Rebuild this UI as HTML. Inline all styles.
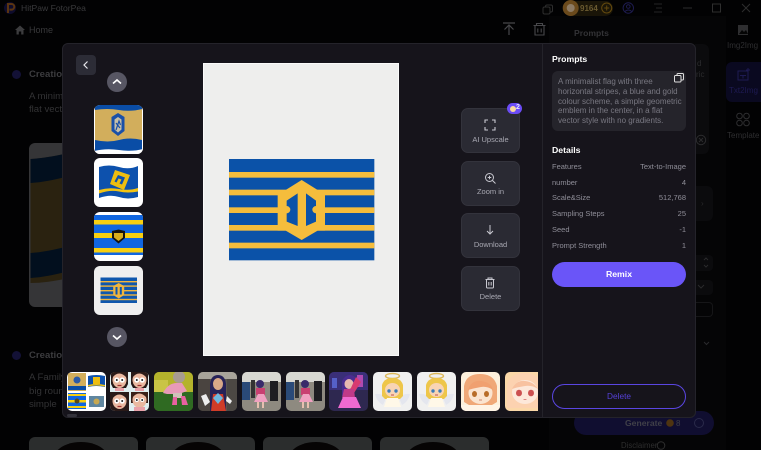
<!DOCTYPE html>
<html><head><meta charset="utf-8">
<style>
html,body{margin:0;padding:0;background:#020203;width:761px;height:450px;overflow:hidden;}
#w{position:absolute;left:0;top:0;width:761px;height:450px;overflow:hidden;font-family:"Liberation Sans",sans-serif;}
.a{position:absolute;white-space:nowrap;}
.bt{position:absolute;left:461.3px;width:56.4px;background:#2a2a33;border:1px solid #33333c;border-radius:7px;height:43.200px;box-sizing:content-box;}
.bt span{position:absolute;left:0;right:0;top:24.500px;text-align:center;font-size:7.500px;line-height:11px;color:#a8a8b2;}
.bt svg{position:absolute;left:21.200px;top:9px;}
.th{position:absolute;left:93.500px;width:49px;height:49px;border-radius:6px;overflow:hidden;}
.st{position:absolute;top:372px;width:39px;height:39px;border-radius:5px;overflow:hidden;}
.st svg,.th svg{display:block;}
.dt{position:absolute;left:552px;width:134px;font-size:7.500px;line-height:12px;color:#8f8e98;}
.dt b{position:absolute;right:0;font-weight:normal;}
.dim{position:absolute;white-space:nowrap;color:#3a3a3c;}
</style></head><body><div id="w">

<!-- background app, dimmed -->
<div class="a" style="left:549px;top:16px;width:177px;height:434px;background:#050506"></div>
<svg class="a" style="left:0;top:0" width="761" height="42" viewBox="0 0 761 42">
<circle cx="10" cy="8" r="6" fill="#0e0c2c"/><path d="M8 13V4h3.500a2.800 2.800 0 0 1 0 5.600H9.500" fill="none" stroke="#5a3410" stroke-width="2"/>
<path d="M15 30l5-4.500 5 4.500h-1.500v4.500h-2.300v-3h-2.400v3h-2.300V30z" fill="#3c3c3e"/>
<rect x="545.500" y="5" width="7" height="7" rx="1.500" fill="none" stroke="#2e2e2e"/><rect x="543" y="7" width="7" height="7" rx="1.500" fill="#040404" stroke="#2e2e2e"/>
<rect x="563" y="1" width="50" height="15" rx="7.500" fill="#1a1508"/>
<circle cx="570.700" cy="8" r="8" fill="#6b4a1c"/><circle cx="570.700" cy="8" r="4" fill="#8c7a64"/>
<text x="580" y="11" font-size="8" font-weight="bold" fill="#6a5a30" font-family="Liberation Sans">9164</text>
<circle cx="606.700" cy="8" r="5" fill="none" stroke="#63490e"/><path d="M604.200 8h5M606.700 5.500v5" stroke="#63490e"/>
<circle cx="628.300" cy="8" r="5.200" fill="none" stroke="#1e1c50"/><circle cx="628.300" cy="6.500" r="1.800" fill="none" stroke="#1e1c50"/><path d="M624.800 11.500q3.500-3 7 0" fill="none" stroke="#1e1c50"/>
<path d="M654 4h8M656 8h6M654 12h8" stroke="#242424"/>
<path d="M683 8h9" stroke="#2c2c2c"/>
<rect x="712.500" y="4" width="8" height="8" fill="none" stroke="#2e2e2e"/>
<path d="M742 4l8 8M750 4l-8 8" stroke="#2e2e2e"/>
<path d="M503 23h12M509 35V25M504.500 29.500L509 25l4.500 4.500" fill="none" stroke="#47474a" stroke-width="1.200"/>
<path d="M533.500 25.500h12M536.500 25.500V23.500h6v2M535 25.500V35h9V25.500M537.800 28.500v4M541.200 28.500v4" fill="none" stroke="#47474a" stroke-width="1.100"/>
</svg>
<div class="dim" style="left:21px;top:2px;font-size:8.600px;line-height:13px">HitPaw FotorPea</div>
<div class="dim" style="left:29px;top:23px;font-size:9px;line-height:14px">Home</div>

<div class="dim" style="left:574px;top:26px;font-size:8.600px;line-height:14px;font-weight:bold;color:#333336">Prompts</div>
<div class="a" style="left:695px;top:44px;width:14px;height:110px;background:#0b0b0d;border-radius:0 6px 6px 0"></div>
<div class="dim" style="left:697px;top:58px;font-size:8px;line-height:11px;color:#2c2c2e">d</div>
<div class="dim" style="left:696px;top:69px;font-size:8px;line-height:11px;color:#2c2c2e">ric</div>
<svg class="a" style="left:695px;top:132px" width="20" height="18" viewBox="0 0 20 18"><circle cx="6" cy="8" r="4.700" fill="none" stroke="#2c2c2e"/><path d="M4 6l4 4M8 6l-4 4" stroke="#2c2c2e"/></svg>
<div class="a" style="left:695px;top:186px;width:18px;height:35px;background:#0b0b0d;border-radius:0 6px 6px 0"></div>
<div class="dim" style="left:701px;top:198px;font-size:8px;line-height:11px;color:#2a2a2c">›</div>
<div class="a" style="left:695px;top:255px;width:18px;height:16px;background:#0b0b0d;border-radius:0 4px 4px 0"></div>
<div class="a" style="left:695px;top:280px;width:18px;height:15px;background:#0b0b0d;border-radius:0 4px 4px 0"></div>
<div class="a" style="left:695px;top:302px;width:18px;height:15px;box-sizing:border-box;border:1px solid #161618;border-left:0;border-radius:0 4px 4px 0"></div>
<svg class="a" style="left:695px;top:255px" width="18" height="100" viewBox="0 0 18 100"><path d="M9 5l2-2 2 2M9 10l2 2 2-2M3 30l3 3 3-3M9 87l2.500 2.500 2.500-2.500" fill="none" stroke="#2a2a2c"/></svg>
<div class="a" style="left:573.500px;top:410.500px;width:140px;height:24.500px;background:#100e30;border-radius:12px"></div>
<div class="dim" style="left:625px;top:416px;font-size:8.600px;line-height:14px;font-weight:bold;color:#404048">Generate</div>
<svg class="a" style="left:665px;top:415px" width="40" height="16" viewBox="0 0 40 16"><circle cx="5" cy="8" r="3.800" fill="#4e3410"/><text x="11" y="11" font-size="8" fill="#404048" font-family="Liberation Sans">8</text><circle cx="34" cy="8" r="4.500" fill="none" stroke="#2a2a4a"/></svg>
<div class="dim" style="left:621px;top:441px;height:9px;overflow:hidden;font-size:7.800px;line-height:9px;color:#2e2e2e">Disclaimer</div>
<svg class="a" style="left:656px;top:441px" width="10" height="9" viewBox="0 0 10 9"><circle cx="5" cy="4.500" r="3.800" fill="none" stroke="#2e2e2e"/></svg>

<div class="a" style="left:726px;top:62px;width:35px;height:40px;background:#0a0920;border-radius:6px 0 0 6px"></div>
<svg class="a" style="left:726px;top:22px" width="35" height="110" viewBox="0 0 35 110">
<rect x="12" y="3" width="10" height="10" fill="#2e2e30"/><path d="M13 12l3-4 2 2 2-2 2 4z" fill="#050505"/>
<rect x="12" y="49" width="10" height="9" fill="none" stroke="#1e1a52"/><path d="M14 53.500h6M17 53.500v3" stroke="#1e1a52"/><path d="M22 46v4M20 48h4" stroke="#1e1a52"/>
<circle cx="13.500" cy="94" r="2.800" fill="none" stroke="#2e2e30"/><circle cx="20.500" cy="94" r="2.800" fill="none" stroke="#2e2e30"/><circle cx="13.500" cy="101" r="2.800" fill="none" stroke="#2e2e30"/><circle cx="20.500" cy="101" r="2.800" fill="none" stroke="#2e2e30"/>
</svg>
<div class="dim" style="left:727px;top:40px;font-size:8px;line-height:12px;color:#2e2e30">Img2Img</div>
<div class="dim" style="left:729px;top:85px;font-size:8px;line-height:12px;color:#1e1a52">Txt2Img</div>
<div class="dim" style="left:727px;top:130px;font-size:8px;line-height:12px;color:#2e2e30">Template</div>

<!-- left feed -->
<div class="a" style="left:12px;top:70px;width:9px;height:9px;border-radius:50%;background:#131136"></div>
<div class="dim" style="left:29px;top:68px;font-size:9.600px;line-height:14px;font-weight:bold;color:#3c3c3f">Creation</div>
<div class="dim" style="left:29px;top:90px;font-size:9.600px;line-height:13px;color:#333335">A minimalist</div>
<div class="dim" style="left:29px;top:103px;font-size:9.600px;line-height:13px;color:#333335">flat vector</div>
<svg class="a" style="left:29px;top:143px" width="40" height="164" viewBox="0 0 40 164">
<path d="M0 6a6 6 0 0 1 6-6h34v164H6a6 6 0 0 1-6-6z" fill="#353537"/>
<path d="M1.500 16q16-1 38.500-6V135q-22 5-38.500 5z" fill="#2a2210"/>
<path d="M1.500 16q16-1 38.500-6V33q-22 6-38.500 7z" fill="#020f1e"/>
<path d="M1.500 110q16-1 38.500-7V128q-22 6-38.500 7z" fill="#020f1e"/>
</svg>
<div class="a" style="left:12px;top:351px;width:9px;height:9px;border-radius:50%;background:#131136"></div>
<div class="dim" style="left:29px;top:349px;font-size:9.600px;line-height:14px;font-weight:bold;color:#3c3c3f">Creation</div>
<div class="dim" style="left:29px;top:371px;font-size:9.600px;line-height:13px;color:#333335">A Family</div>
<div class="dim" style="left:29px;top:385px;font-size:9.600px;line-height:13px;color:#333335">big round</div>
<div class="dim" style="left:29px;top:398px;font-size:9.600px;line-height:13px;color:#333335">simple</div>
<svg class="a" style="left:0;top:430px" width="540" height="20" viewBox="0 0 540 20">
<path d="M29 20V13a6 6 0 0 1 6-6h97a6 6 0 0 1 6 6v7z" fill="#2b2d2d"/><path d="M57.700 20A28 18 0 0 1 104.300 20z" fill="#060404"/>
<path d="M146 20V13a6 6 0 0 1 6-6h97a6 6 0 0 1 6 6v7z" fill="#2b2d2d"/><path d="M174.700 20A28 18 0 0 1 221.300 20z" fill="#060404"/>
<path d="M263 20V13a6 6 0 0 1 6-6h97a6 6 0 0 1 6 6v7z" fill="#2b2d2d"/><path d="M292.700 20A28 18 0 0 1 339.300 20z" fill="#060404"/>
<path d="M380 20V13a6 6 0 0 1 6-6h97a6 6 0 0 1 6 6v7z" fill="#2b2d2d"/><path d="M409.700 20A28 18 0 0 1 456.300 20z" fill="#060404"/>
</svg>

<!-- modal -->
<div class="a" style="left:61.500px;top:43px;width:634px;height:375px;background:#16141b;border:1px solid #24232a;border-radius:6px;box-sizing:border-box"></div>
<div class="a" style="left:541.800px;top:44px;width:1.200px;height:373px;background:#24232a"></div>
<div class="a" style="left:67px;top:414px;width:10px;height:3px;background:#33323a;border-radius:2px"></div>

<div class="a" style="left:76px;top:55px;width:20px;height:20px;background:#2c2c36;border-radius:4px"></div>
<svg class="a" style="left:76px;top:55px" width="20" height="20"><path d="M11.500 6.500L8 10l3.500 3.500" fill="none" stroke="#e8e8ee" stroke-width="1.200"/></svg>
<svg class="a" style="left:107px;top:72px" width="20" height="20"><circle cx="10" cy="10" r="10" fill="#575663"/><path d="M6 11.500l4-3.500 4 3.500" fill="none" stroke="#fff" stroke-width="1.600"/></svg>
<svg class="a" style="left:107px;top:327px" width="20" height="20"><circle cx="10" cy="10" r="10" fill="#575663"/><path d="M6 8.500l4 3.500 4-3.500" fill="none" stroke="#fff" stroke-width="1.600"/></svg>

<!-- vertical thumbs -->
<div class="th" style="top:104.700px;background:#fff"><svg width="49" height="49" viewBox="0 0 49 49">
<rect x="1" y="0" width="47" height="46" fill="#0a4da6"/>
<path d="M1 5q12-2 24 0t23-1V35q-12-3-23 0t-24 0z" fill="#d2ae5c"/>
<path d="M0 46q12-3 25-1t24-1v5H0z" fill="#fff"/>
<path d="M24 8l6.500 4v14l-6.500 5-6.500-5V12z" fill="#1a50a8"/><path d="M24 12l3.500 2.500v10L24 27.500l-3.500-3v-10z" fill="#c8c0a8"/><path d="M22 25l3-9 1.500 4M22 18l4 5" stroke="#1a50a8" stroke-width="1.200" fill="none"/></svg></div>
<div class="th" style="top:158px;background:#fff"><svg width="49" height="49" viewBox="0 0 49 49">
<path d="M5 9q10-3 20 0t19-1v31q-10 3-19 0t-20 1z" fill="#0d51ad"/><path d="M5 32q10-3 20-1t19-1v3.500q-10 2-19 0t-20 2z" fill="#f2c313"/>
<path d="M21 12l15 5-6 15-14-6z" fill="#eebe10"/><path d="M24 17l7 2.500-3 7-2.500-1 2-4-3-1-2 4-2-1z" fill="#0d51ad"/></svg></div>
<div class="th" style="top:212px;background:#fff"><svg width="49" height="49" viewBox="0 0 49 49">
<rect y="3" width="49" height="40" fill="#1066e0"/><rect y="8" width="49" height="4.500" fill="#f7cf10"/><rect y="21" width="49" height="5" fill="#f7cf10"/><rect y="36" width="49" height="4.500" fill="#f7cf10"/>
<path d="M18 19l6.500-1.500L31 19v7l-6.500 5.500L18 26z" fill="#16130c"/><path d="M20 21h9v4.500l-4.500 3.500-4.500-3.500z" fill="#d7ac1c"/></svg></div>
<div class="th" style="top:265.500px;background:#efefef"><svg width="49" height="49" viewBox="0 0 49 49">
<rect x="6.500" y="11.500" width="36.500" height="25.500" fill="#0f57ad"/><g fill="#f0b53d"><rect x="6.500" y="15" width="36.500" height="1.400"/><rect x="6.500" y="19.400" width="36.500" height="1.400"/><rect x="6.500" y="24" width="36.500" height="1.400"/><rect x="6.500" y="28.300" width="36.500" height="1.400"/><rect x="6.500" y="32.800" width="36.500" height="1.400"/></g>
<path d="M24.700 17l5.500 3v9l-5.500 3.500-5.500-3.500v-9z" fill="#f0b53d"/><rect x="21.500" y="21" width="2" height="7.500" fill="#0f57ad"/><rect x="25.800" y="21" width="2" height="7.500" fill="#0f57ad"/></svg></div>

<!-- main image -->
<div class="a" style="left:203.300px;top:62.700px;width:196px;height:293.500px;box-sizing:border-box;background:#eeeeed;border:1px solid #fafafa"></div>
<svg class="a" style="left:220px;top:150px" width="165" height="120" viewBox="0 0 495 360">
<rect x="27" y="27" width="436" height="304" fill="#0b52a8"/>
<g fill="#f5bd3c"><rect x="27" y="66" width="436" height="17"/><rect x="27" y="119" width="436" height="17"/><rect x="27" y="172" width="436" height="17"/><rect x="27" y="225" width="436" height="17"/><rect x="27" y="278" width="436" height="17"/></g>
<path d="M245 90L293 120H315V225V242H293L245 270L197 242H173V120H197Z" fill="#f5bd3c"/>
<path d="M233 130L200 152V168A11 11 0 0 1 200 190V215L233 228Z" fill="#0b52a8"/>
<path d="M258 130L288 152V168A11 11 0 0 0 288 190V215L258 228Z" fill="#0b52a8"/>
</svg>

<!-- action buttons -->
<div class="bt" style="top:108px"><svg width="14" height="14" viewBox="0 0 14 14"><path d="M2 5V2h3M9 2h3v3M12 9v3H9M5 12H2V9" fill="none" stroke="#c8c8d0" stroke-width="1.100"/></svg><span>AI Upscale</span></div>
<div class="a" style="left:506.700px;top:103.300px;width:15.600px;height:10.400px;background:#6b4cf6;border-radius:6px"></div>
<div class="a" style="left:509.500px;top:105.500px;width:6px;height:6px;background:#f8d9a0;border-radius:50%"></div>
<div class="a" style="left:516px;top:103.300px;font-size:7px;line-height:10.500px;color:#e8e4ff;font-weight:bold">2</div>
<div class="bt" style="top:160.700px"><svg width="14" height="14" viewBox="0 0 14 14"><circle cx="6.500" cy="6.500" r="4" fill="none" stroke="#c8c8d0" stroke-width="1"/><path d="M9.500 9.500l3 3M4.700 6.500h3.600M6.500 4.700v3.600" stroke="#c8c8d0" stroke-width="1"/></svg><span>Zoom in</span></div>
<div class="bt" style="top:213.300px"><svg width="14" height="14" viewBox="0 0 14 14"><path d="M7 2v9M4 8l3 3 3-3" fill="none" stroke="#c8c8d0" stroke-width="1"/></svg><span>Download</span></div>
<div class="bt" style="top:265.700px"><svg width="14" height="14" viewBox="0 0 14 14"><path d="M2.500 3.500h9M5 3.500V2h4v1.500M3.500 3.500V11q0 1 1 1h5q1 0 1-1V3.500M5.800 6v3.500M8.200 6v3.500" fill="none" stroke="#c8c8d0" stroke-width="1"/></svg><span>Delete</span></div>

<!-- right panel -->
<div class="a" style="left:552px;top:52px;font-size:8.700px;line-height:14px;font-weight:bold;color:#fff">Prompts</div>
<div class="a" style="left:552px;top:71px;width:134px;height:60px;background:#25242b;border-radius:6px"></div>
<div class="a" style="left:558px;top:77px;font-size:8px;line-height:9.750px;color:#797882">A minimalist flag with three<br>horizontal stripes, a blue and gold<br>colour scheme, a simple geometric<br>emblem in the center, in a flat<br>vector style with no gradients.</div>
<svg class="a" style="left:673px;top:72px" width="12" height="12" viewBox="0 0 12 12"><rect x="4" y="1.500" width="6.500" height="6.500" rx="1" fill="none" stroke="#ddd" stroke-width="1"/><rect x="1.500" y="3.500" width="6.500" height="6.500" rx="1" fill="#25242b" stroke="#ddd" stroke-width="1"/></svg>
<div class="a" style="left:552px;top:143px;font-size:8.700px;line-height:14px;font-weight:bold;color:#fff">Details</div>
<div class="dt" style="top:161px">Features<b>Text-to-Image</b></div>
<div class="dt" style="top:176.500px">number<b>4</b></div>
<div class="dt" style="top:192px">Scale&amp;Size<b>512,768</b></div>
<div class="dt" style="top:208px">Sampling Steps<b>25</b></div>
<div class="dt" style="top:224px">Seed<b>-1</b></div>
<div class="dt" style="top:240px">Prompt Strength<b>1</b></div>
<div class="a" style="left:552px;top:262px;width:134px;height:25px;background:#6a55f8;border-radius:12.500px;color:#fff;font-size:8.700px;font-weight:bold;line-height:25px;text-align:center">Remix</div>
<div class="a" style="left:552px;top:384px;width:134px;height:25px;box-sizing:border-box;border:1.500px solid #5a46e2;border-radius:12.500px;color:#5540d6;font-size:8.300px;line-height:22px;text-align:center">Delete</div>

<!-- bottom strip -->
<div class="st" style="left:66.500px;background:#fff"><svg width="39" height="39" viewBox="0 0 39 39">
<rect x="1" y="1" width="18" height="18" fill="#d2ae5c"/><rect x="1" y="14" width="18" height="4" fill="#0a4da6"/><circle cx="10" cy="8" r="3.500" fill="#2a5aa8"/>
<path d="M21 4q8-2 17 0v11q-9-2-17 0z" fill="#0d51ad"/><rect x="26" y="5" width="7" height="7" fill="#eebe10"/><path d="M21 13q8-2 17 0v1.500q-9-2-17 0z" fill="#f2c313"/>
<rect x="1" y="21" width="18" height="16" fill="#1066e0"/><rect x="1" y="22" width="18" height="2" fill="#f7cf10"/><rect x="1" y="28" width="18" height="2.500" fill="#f7cf10"/><rect x="1" y="34" width="18" height="2" fill="#f7cf10"/><circle cx="10" cy="29" r="2.500" fill="#5a4a18"/>
<rect x="22" y="24" width="15" height="11" fill="#5f86a0"/><circle cx="29.500" cy="29.500" r="3" fill="#c8a850"/></svg></div>
<div class="st" style="left:110px;background:#dfeef0"><svg width="39" height="39" viewBox="0 0 39 39">
<g><path d="M1 0h17v12l-2 4H3l-2-4z" fill="#2a1a18"/><ellipse cx="9.500" cy="8" rx="7" ry="8" fill="#eab8a0"/><path d="M2 6q7-9 15 0V0H2z" fill="#2a1a18"/><circle cx="6.800" cy="8" r="2.600" fill="#fff"/><circle cx="12.200" cy="8" r="2.600" fill="#fff"/><circle cx="6.800" cy="8" r="1" fill="#222"/><circle cx="12.200" cy="8" r="1" fill="#222"/><path d="M7.500 13.500h4" stroke="#a03030" stroke-width="1.200"/><path d="M5 16h9v3H5z" fill="#e8a0a8"/></g>
<g transform="translate(20,0)"><path d="M1 0h17v12l-2 4H3l-2-4z" fill="#2a1a18"/><ellipse cx="9.500" cy="8" rx="7" ry="8" fill="#eab8a0"/><path d="M2 6q7-9 15 0V0H2z" fill="#2a1a18"/><circle cx="6.800" cy="8" r="2.600" fill="#fff"/><circle cx="12.200" cy="8" r="2.600" fill="#fff"/><circle cx="6.800" cy="8" r="1" fill="#222"/><circle cx="12.200" cy="8" r="1" fill="#222"/><path d="M7.500 13.500h4" stroke="#a03030" stroke-width="1.200"/><path d="M5 16h9v3H5z" fill="#e8a0a8"/></g>
<g transform="translate(0,20)"><path d="M0 0h19v19H0z" fill="#2a1a18"/><ellipse cx="9.500" cy="9" rx="7" ry="8" fill="#eab8a0"/><path d="M2 7q7-9 15 0V0H2z" fill="#2a1a18"/><circle cx="6.800" cy="9" r="2.600" fill="#fff"/><circle cx="12.200" cy="9" r="2.600" fill="#fff"/><circle cx="6.800" cy="9" r="1" fill="#222"/><circle cx="12.200" cy="9" r="1" fill="#222"/><path d="M7.500 14.500h4" stroke="#a03030" stroke-width="1.200"/></g>
<g transform="translate(20,20)"><path d="M1 0h17v11H1z" fill="#3a2018"/><ellipse cx="9.500" cy="8" rx="7" ry="8" fill="#eab8a0"/><path d="M2 6q7-9 15 0V0H2z" fill="#3a2018"/><circle cx="6.800" cy="8" r="2" fill="#fff"/><circle cx="12.200" cy="8" r="2" fill="#fff"/><circle cx="6.800" cy="8" r="1" fill="#222"/><circle cx="12.200" cy="8" r="1" fill="#222"/><path d="M4 15h11v4H4z" fill="#e8a0a8"/></g></svg></div>
<div class="st" style="left:154px;background:#7f8a20"><svg width="39" height="39" viewBox="0 0 39 39">
<rect width="39" height="21" fill="#b4b32c"/><rect y="20" width="39" height="19" fill="#2f6a22"/><rect y="8" width="14" height="12" fill="#c9c445"/>
<ellipse cx="25" cy="5" rx="6" ry="6" fill="#a89c92"/><path d="M9 21q5-10 14-10h5l5 8-8 3H13z" fill="#e89ab8"/><path d="M19 21h9v5h-9z" fill="#cfc2b8"/><path d="M19 25h4v8h-5zM27 24h4l3 9h-6z" fill="#e861a0"/></svg></div>
<div class="st" style="left:198px;background:#5a564e"><svg width="39" height="39" viewBox="0 0 39 39">
<rect width="39" height="7" fill="#a8a49a"/><rect y="7" width="12" height="32" fill="#4a4440"/><rect x="29" y="7" width="10" height="32" fill="#4c4844"/><path d="M12 39V12q1-9 8-9t8 9v27z" fill="#272258"/><ellipse cx="20" cy="12" rx="5" ry="6" fill="#d8a888"/><path d="M13 39l2-17h10l3 17z" fill="#d03c28"/><path d="M20 21l5 5-5 6-5-6z" fill="#70b8e0"/><path d="M3 24l5-2 4 8-5 4z" fill="#eee"/><path d="M29 24l5 5-2 3-4-3z" fill="#eee"/></svg></div>
<div class="st" style="left:242px;background:#8e8a80"><svg width="39" height="39" viewBox="0 0 39 39">
<rect width="39" height="10" fill="#d8d8d2"/><rect x="0" y="10" width="8" height="18" fill="#2a4a78"/><rect x="28" y="9" width="8" height="20" fill="#1e1e22"/><rect x="9" y="8" width="4" height="18" fill="#333"/><circle cx="18" cy="12" r="4" fill="#382a6a"/><rect x="14" y="16" width="9" height="7" fill="#c84070"/><path d="M12 30l4-8h6l4 8z" fill="#f0a0c0"/><rect x="15" y="30" width="2" height="6" fill="#e8c0b0"/><rect x="20" y="30" width="2" height="6" fill="#e8c0b0"/></svg></div>
<div class="st" style="left:285.500px;background:#8e8a80"><svg width="39" height="39" viewBox="0 0 39 39">
<rect width="39" height="10" fill="#d8d8d2"/><rect x="0" y="10" width="8" height="18" fill="#2a4a78"/><rect x="28" y="9" width="8" height="20" fill="#1e1e22"/><rect x="9" y="8" width="4" height="18" fill="#333"/><circle cx="19" cy="12" r="4" fill="#382a6a"/><rect x="15" y="16" width="9" height="7" fill="#c84070"/><path d="M13 30l4-8h6l4 8z" fill="#f0a0c0"/><rect x="16" y="30" width="2" height="6" fill="#e8c0b0"/><rect x="21" y="30" width="2" height="6" fill="#e8c0b0"/></svg></div>
<div class="st" style="left:329px;background:#2e2850"><svg width="39" height="39" viewBox="0 0 39 39">
<rect x="0" y="0" width="39" height="18" fill="#3a2f78"/><rect x="28" y="3" width="6" height="12" fill="#b04ab0"/><rect x="3" y="6" width="5" height="10" fill="#5560c8"/><path d="M13 24V9q3-6 8-6t7 6l-3 14z" fill="#4a2c90"/><ellipse cx="20" cy="12" rx="4.500" ry="5" fill="#e8b8b0"/><path d="M27 5l5 5-7 11-4-3z" fill="#d83a70"/><path d="M15 17h10l1 9H13z" fill="#c03a88"/><path d="M9 36l5-11h13l5 11z" fill="#f06ad0"/></svg></div>
<div class="st" style="left:373px;background:#f0f0f0"><svg width="39" height="39" viewBox="0 0 39 39">
<ellipse cx="19.500" cy="4" rx="7" ry="2.500" fill="none" stroke="#dcb85a" stroke-width="1.400"/><path d="M2 22q7-1 11 4l-3 7q-6-3-8-11zM37 22q-7-1-11 4l3 7q6-3 8-11z" fill="#e4e6ee"/><path d="M9 24V13q2-7 10.500-7T30 13v11l-3 3H12z" fill="#eec64a"/><ellipse cx="19.500" cy="18" rx="7.500" ry="7" fill="#f8d4b4"/><circle cx="16" cy="19" r="1.700" fill="#3d7db8"/><circle cx="23" cy="19" r="1.700" fill="#3d7db8"/><path d="M18 23h3" stroke="#c05050"/><path d="M14 26h11l3 9H11z" fill="#fff8e8"/></svg></div>
<div class="st" style="left:417px;background:#f0f0f0"><svg width="39" height="39" viewBox="0 0 39 39">
<ellipse cx="19.500" cy="4" rx="7" ry="2.500" fill="none" stroke="#dcb85a" stroke-width="1.400"/><path d="M2 22q7-1 11 4l-3 7q-6-3-8-11zM37 22q-7-1-11 4l3 7q6-3 8-11z" fill="#e4e6ee"/><path d="M9 24V13q2-7 10.500-7T30 13v11l-3 3H12z" fill="#eec64a"/><ellipse cx="19.500" cy="18" rx="7.500" ry="7" fill="#f8d4b4"/><circle cx="16" cy="19" r="1.700" fill="#3d7db8"/><circle cx="23" cy="19" r="1.700" fill="#3d7db8"/><path d="M18 23h3" stroke="#c05050"/><path d="M14 26h11l3 9H11z" fill="#fff8e8"/></svg></div>
<div class="st" style="left:461px;background:#fdf0dc"><svg width="39" height="39" viewBox="0 0 39 39">
<path d="M3 30V14Q5 2 19 2t17 12v16l-5 3H8z" fill="#f0a878"/><ellipse cx="19.500" cy="21" rx="12" ry="11" fill="#fbe4d0"/><path d="M7 18q3-10 13-9t12 9q-6-4-12-3t-13 3z" fill="#f0a070"/><ellipse cx="13.500" cy="22" rx="2.500" ry="3" fill="#b86c28"/><ellipse cx="25.500" cy="22" rx="2.500" ry="3" fill="#b86c28"/><path d="M18 28h3" stroke="#d08870"/><path d="M0 33h39v6H0z" fill="#fff4e6"/></svg></div>
<div class="a" style="left:505px;top:372px;width:32.500px;height:39px;border-radius:5px 0 0 5px;overflow:hidden;background:#fbd8a8"><svg width="39" height="39" viewBox="0 0 39 39" style="display:block">
<path d="M2 36V14Q4 1 19 1t18 13v22z" fill="#fcd2b0"/><ellipse cx="20" cy="20" rx="13" ry="12" fill="#fde8da"/><path d="M7 17q4-9 13-8t13 8q-6-4-13-3t-13 3z" fill="#f8c2a0"/><ellipse cx="14" cy="21" rx="3" ry="3.300" fill="#cc5050"/><ellipse cx="26" cy="21" rx="3" ry="3.300" fill="#cc5050"/><path d="M18 27q2 2 4 0" fill="#d87878"/></svg></div>
</div></body></html>
